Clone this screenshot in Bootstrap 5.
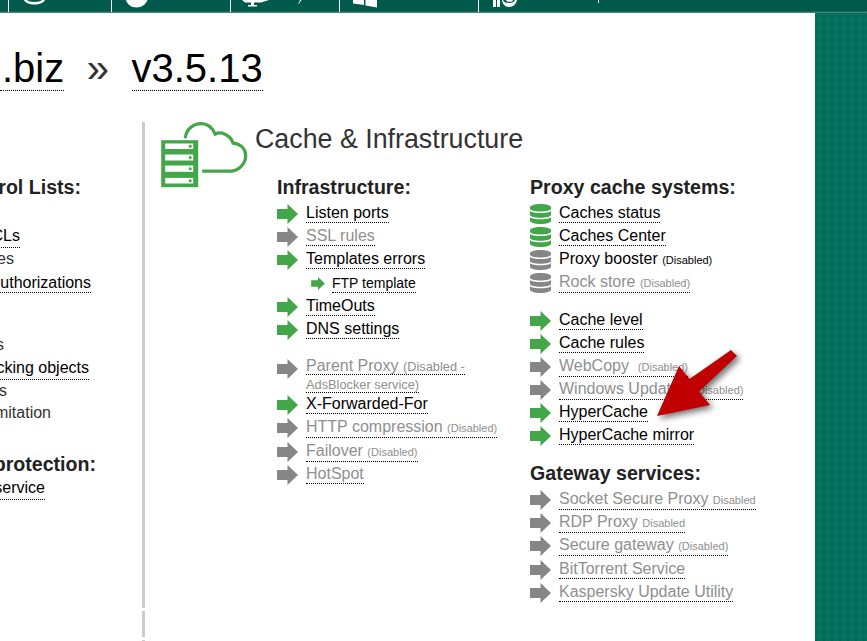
<!DOCTYPE html>
<html lang="en">

<head>
    <meta charset="UTF-8">
    <title>Cache &amp; Infrastructure</title>
    <meta name="viewport" content="width=device-width, initial-scale=1">
    <link href="https://cdn.jsdelivr.net/npm/bootstrap@5.3.0/dist/css/bootstrap.min.css" rel="stylesheet">
    <style>
        html, body {
            height: 100%;
        }

        body {
            font-family: "Liberation Sans", Arial, sans-serif;
            color: #000;
            overflow: hidden;
            background-color: #04705d;
            background-image:
                radial-gradient(circle, #0f8069 1px, transparent 1.5px),
                radial-gradient(circle, #026352 1px, transparent 1.5px);
            background-size: 8px 8px;
            background-position: 0 0, 4px 4px;
        }

        .page-wrap {
            position: relative;
            width: 867px;
            height: 641px;
            overflow: hidden;
        }

        /* top bar, icons are cut by the window edge */
        .top-bar {
            height: 13px;
            background: linear-gradient(#005a4b 0, #005a4b 11px, #5d9488 13px);
        }

        .top-item {
            height: 12px;
            border-left: 1px solid #fff;
        }

        .t1 { margin-left: 8px; width: 103px; padding-left: 14px; }
        .t2 { width: 119px; padding-left: 11px; }
        .t3 { width: 109px; padding-left: 11px; }
        .t4 { width: 139px; padding-left: 13px; }
        .t5 { width: 200px; padding-left: 14px; }

        .top-item svg {
            display: block;
            fill: #fff;
        }

        .top-tick {
            margin-left: 75px;
        }

        .panel {
            width: 815px;
            height: 628px;
            background: #fff;
        }

        .title-line {
            height: 109px;
            padding-top: 32px;
            font-size: 40px;
            line-height: 46px;
            color: #333;
            gap: 22.5px;
        }

        .title-line a {
            color: #333;
        }

        .biz-link {
            padding-left: 2px;
        }

        a.dots {
            color: #000;
            text-decoration: none;
            border-bottom: 1px dotted #000;
        }

        .off, a.dots.off {
            color: #8f8f8f;
        }

        .tiny {
            font-size: 11px;
        }

        .tiny-lg {
            font-size: 12.8px;
        }

        .side-col {
            width: 142px;
            flex: none;
            overflow: hidden;
            padding-top: 54px;
        }

        .side-line {
            height: 22.7px;
            font-size: 16px;
            line-height: 22.7px;
            white-space: nowrap;
            color: #333;
        }

        .side-first { height: 26px; }
        .side-gap { height: 18.5px; }
        .side-down { padding-top: 2px; }

        .e20 { width: 20px; }
        .e14 { width: 14px; }
        .e91 { width: 91px; }
        .e4 { width: 4px; }
        .e89 { width: 89px; }
        .e7 { width: 7px; }
        .e51 { width: 51px; }
        .e45 { width: 45px; }
        .e81 { width: 81px; }
        .e96 { width: 96px; }

        .side-head {
            font-size: 19.6px;
            font-weight: 700;
            line-height: 23px;
            white-space: nowrap;
            color: #222;
        }

        .side-head2 { margin-top: 28px; margin-bottom: 1px; }

        .divider {
            width: 3px;
            flex: none;
            gap: 3px;
        }

        .divider div {
            background: #ccc;
        }

        .d1 { height: 486px; }
        .d2 { height: 26px; }
        .d3 { height: 3px; }

        .content-col {
            padding-left: 16px;
        }

        .cloud-icon {
            width: 90px;
            height: 68px;
            flex: none;
        }

        .section-title {
            margin: 0 0 0 4px;
            font-size: 26.8px;
            font-weight: 400;
            line-height: 34px;
            color: #333;
        }

        .head-box {
            height: 54px;
        }

        .lists {
            padding-left: 116px;
        }

        .list-a { width: 253px; flex: none; }

        .list-head {
            font-size: 19.6px;
            font-weight: 700;
            line-height: 23px;
            color: #222;
            white-space: nowrap;
            margin-bottom: 3px;
        }

        .item {
            height: 23px;
            font-size: 16px;
            line-height: 18px;
            white-space: nowrap;
            gap: 8px;
        }

        .item svg {
            width: 21px;
            height: 20px;
            flex: none;
        }

        .item-sub {
            height: 24px;
            padding-left: 34px;
            font-size: 14px;
            gap: 7px;
        }

        .item-sub svg {
            width: 14px;
            height: 13px;
        }

        .item-wrap {
            height: 36px;
            line-height: 17px;
        }

        .item-wrap svg {
            margin-top: -13px;
        }

        .item-tall {
            height: 24px;
        }

        .item-gw {
            height: 23.3px;
        }

        .ok { color: #43a648; }
        .no { color: #868686; }
        .sp16 { height: 16px; }
        .sp15 { height: 15px; }

        .red-arrow {
            position: absolute;
            left: 640px;
            top: 340px;
            width: 110px;
            height: 90px;
            filter: drop-shadow(3px 3px 3px rgba(0, 0, 0, .55));
        }
    </style>
</head>

<body>
    <svg class="d-none">
        <symbol id="arr" viewBox="0 0 21 20">
            <path d="M0 5h10.5V0L21 10 10.5 20v-5H0z" fill="currentColor" />
        </symbol>
        <symbol id="db" viewBox="0 0 21 20">
            <g fill="currentColor">
                <path d="M0 3.2C0 1.4 4.7 0 10.5 0S21 1.4 21 3.2v1.2C21 6.2 16.3 7.4 10.5 7.4S0 6.2 0 4.4z" />
                <path d="M0 7c1.6 1.4 5.600 2 10.500 2S19.400 8.400 21 7v3.700c0 1.800-4.700 3-10.500 3S0 12.500 0 10.700z" />
                <path d="M0 13.300c1.600 1.400 5.600 2 10.500 2s8.900-.6 10.500-2v3.500C21 18.700 16.300 20 10.500 20S0 18.700 0 16.800z" />
            </g>
        </symbol>
    </svg>

    <div class="page-wrap">
        <!-- top bar -->
        <div class="top-bar d-flex">
            <div class="top-item t1">
                <svg width="24" height="12" viewBox="0 0 24 12"><path d="M1 0c1 2.500 5 4.500 10.500 4.500S21 2.500 22 0h-3c-1 1-3.500 2-7.500 2S5 1 4 0z" /></svg>
            </div>
            <div class="top-item t2">
                <svg width="28" height="12" viewBox="0 0 28 12"><path d="M3 0c1 4 5 7.500 10.500 7.500S23 4 24.500 0z" /></svg>
            </div>
            <div class="top-item t3 d-flex">
                <svg width="30" height="12" viewBox="0 0 30 12"><path d="M0 0l3 2.500h6V5H6v1.500h9V5h-3V2.500h7L27 0z" /></svg>
                <svg class="ms-4" width="6" height="12" viewBox="0 0 6 12"><path d="M4 0h1.500L3 3.500H1.500L3 2.500z" /></svg>
            </div>
            <div class="top-item t4">
                <svg width="26" height="12" viewBox="0 0 26 12"><path d="M0 0h11v5L0 3.500zM12.500 0H24v7.500L12.500 5.500z" /></svg>
            </div>
            <div class="top-item t5 d-flex">
                <svg width="30" height="12" viewBox="0 0 30 12"><path d="M0 0h3v7H0zM4 0h3v7H4z" /><path d="M9 0h1c.5 2 2.500 3 6 3s5-1 6-3h2c-.5 3.500-3.500 7-8 7S9.500 3.500 9 0zM13 0h7c-.5 1.500-1.800 1.800-3.500 1.800S13.500 1.500 13 0z" /></svg>
                <svg class="top-tick" width="1" height="3" viewBox="0 0 1 3"><rect width="1" height="3" /></svg>
            </div>
        </div>

        <div class="panel">
            <!-- title -->
            <div class="title-line d-flex align-items-start">
                <div><a class="dots biz-link" href="#">.biz</a></div>
                <div>»</div>
                <div><a class="dots" href="#">v3.5.13</a></div>
            </div>

            <div class="d-flex">
                <!-- left menu, cut by the window edge -->
                <div class="side-col">
                    <div class="side-head d-flex justify-content-end e81">rol Lists:</div>
                    <div class="side-line side-first"></div>
                    <div class="side-line d-flex justify-content-end e20"><a class="dots" href="#">ACLs</a></div>
                    <div class="side-line d-flex justify-content-end e14">es</div>
                    <div class="side-line side-down d-flex justify-content-end e91"><a class="dots" href="#">uthorizations</a></div>
                    <div class="side-line"></div>
                    <div class="side-gap"></div>
                    <div class="side-line d-flex justify-content-end e4">s</div>
                    <div class="side-line d-flex justify-content-end e89"><a class="dots" href="#">cking objects</a></div>
                    <div class="side-line d-flex justify-content-end e7">s</div>
                    <div class="side-line d-flex justify-content-end e51">mitation</div>
                    <div class="side-head side-head2 d-flex justify-content-end e96">protection:</div>
                    <div class="side-line d-flex justify-content-end e45"><a class="dots" href="#">service</a></div>
                </div>

                <div class="divider d-flex flex-column">
                    <div class="d1"></div>
                    <div class="d2"></div>
                    <div class="d3"></div>
                </div>

                <div class="content-col flex-grow-1">
                    <div class="d-flex head-box">
                        <svg class="cloud-icon" viewBox="0.800 0.800 90 68">
                            <path d="M25 17C26 8 33 2.500 41 2.500C47 2.500 52 6 55 13C60 10 70 13 73 22C81 23 85.500 28 85.500 34.500C85.500 43 78 50 70 50H42" fill="none" stroke="#43a648" stroke-width="3.200" />
                            <rect x="1" y="19" width="37" height="47" fill="#43a648" />
                            <g fill="#fff">
                                <rect x="5" y="22.300" width="28" height="5.500" />
                                <rect x="5" y="33.300" width="28" height="6" />
                                <rect x="5" y="44.300" width="28" height="6.300" />
                                <rect x="5" y="56.700" width="28" height="5.600" />
                            </g>
                            <g fill="#43a648">
                                <circle cx="30" cy="25" r="1.500" />
                                <circle cx="30" cy="36.300" r="1.500" />
                                <circle cx="30" cy="47.500" r="1.500" />
                                <circle cx="30" cy="59.500" r="1.500" />
                            </g>
                        </svg>
                        <h2 class="section-title">Cache &amp; Infrastructure</h2>
                    </div>

                    <div class="lists d-flex">
                        <div class="list-a">
                            <div class="list-head">Infrastructure:</div>
                            <div class="item d-flex align-items-center"><svg class="ok"><use href="#arr" /></svg><a class="dots" href="#">Listen ports</a></div>
                            <div class="item d-flex align-items-center"><svg class="no"><use href="#arr" /></svg><a class="dots off" href="#">SSL rules</a></div>
                            <div class="item d-flex align-items-center"><svg class="ok"><use href="#arr" /></svg><a class="dots" href="#">Templates errors</a></div>
                            <div class="item item-sub d-flex align-items-center"><svg class="ok"><use href="#arr" /></svg><a class="dots" href="#">FTP template</a></div>
                            <div class="item d-flex align-items-center"><svg class="ok"><use href="#arr" /></svg><a class="dots" href="#">TimeOuts</a></div>
                            <div class="item d-flex align-items-center"><svg class="ok"><use href="#arr" /></svg><a class="dots" href="#">DNS settings</a></div>
                            <div class="sp16"></div>
                            <div class="item item-wrap d-flex align-items-center"><svg class="no"><use href="#arr" /></svg><div><a class="dots off" href="#">Parent Proxy <span class="tiny-lg">(Disabled -<br>AdsBlocker service)</span></a></div></div>
                            <div class="item d-flex align-items-center"><svg class="ok"><use href="#arr" /></svg><a class="dots" href="#">X-Forwarded-For</a></div>
                            <div class="item item-tall d-flex align-items-center"><svg class="no"><use href="#arr" /></svg><a class="dots off" href="#">HTTP compression <span class="tiny">(Disabled)</span></a></div>
                            <div class="item d-flex align-items-center"><svg class="no"><use href="#arr" /></svg><a class="dots off" href="#">Failover <span class="tiny">(Disabled)</span></a></div>
                            <div class="item d-flex align-items-center"><svg class="no"><use href="#arr" /></svg><a class="dots off" href="#">HotSpot</a></div>
                        </div>

                        <div>
                            <div class="list-head">Proxy cache systems:</div>
                            <div class="item d-flex align-items-center"><svg class="ok"><use href="#db" /></svg><a class="dots" href="#">Caches status</a></div>
                            <div class="item d-flex align-items-center"><svg class="ok"><use href="#db" /></svg><a class="dots" href="#">Caches Center</a></div>
                            <div class="item d-flex align-items-center"><svg class="no"><use href="#db" /></svg><span>Proxy booster <span class="tiny">(Disabled)</span></span></div>
                            <div class="item d-flex align-items-center"><svg class="no"><use href="#db" /></svg><a class="dots off" href="#">Rock store <span class="tiny">(Disabled)</span></a></div>
                            <div class="sp15"></div>
                            <div class="item d-flex align-items-center"><svg class="ok"><use href="#arr" /></svg><a class="dots" href="#">Cache level</a></div>
                            <div class="item d-flex align-items-center"><svg class="ok"><use href="#arr" /></svg><a class="dots" href="#">Cache rules</a></div>
                            <div class="item d-flex align-items-center"><svg class="no"><use href="#arr" /></svg><a class="dots off" href="#">WebCopy &nbsp;<span class="tiny">(Disabled)</span></a></div>
                            <div class="item d-flex align-items-center"><svg class="no"><use href="#arr" /></svg><a class="dots off" href="#">Windows Update &nbsp;&nbsp;<span class="tiny">(Disabled)</span></a></div>
                            <div class="item d-flex align-items-center"><svg class="ok"><use href="#arr" /></svg><a class="dots" href="#">HyperCache</a></div>
                            <div class="item d-flex align-items-center"><svg class="ok"><use href="#arr" /></svg><a class="dots" href="#">HyperCache mirror</a></div>
                            <div class="sp15"></div>
                            <div class="list-head">Gateway services:</div>
                            <div class="item item-gw d-flex align-items-center"><svg class="no"><use href="#arr" /></svg><a class="dots off" href="#">Socket Secure Proxy <span class="tiny">Disabled</span></a></div>
                            <div class="item item-gw d-flex align-items-center"><svg class="no"><use href="#arr" /></svg><a class="dots off" href="#">RDP Proxy <span class="tiny">Disabled</span></a></div>
                            <div class="item item-gw d-flex align-items-center"><svg class="no"><use href="#arr" /></svg><a class="dots off" href="#">Secure gateway <span class="tiny">(Disabled)</span></a></div>
                            <div class="item item-gw d-flex align-items-center"><svg class="no"><use href="#arr" /></svg><a class="dots off" href="#">BitTorrent Service</a></div>
                            <div class="item item-gw d-flex align-items-center"><svg class="no"><use href="#arr" /></svg><a class="dots off" href="#">Kaspersky Update Utility</a></div>
                        </div>
                    </div>
                </div>
            </div>
        </div>

        <!-- annotation arrow on top of the screenshot -->
        <svg class="red-arrow" viewBox="0 0 110 90">
            <path d="M17 76L39 26L49.500 39L91 10L97 16L59 51.500L70 65z" fill="#c00000" />
        </svg>
    </div>

    <script src="https://cdn.jsdelivr.net/npm/bootstrap@5.3.0/dist/js/bootstrap.bundle.min.js"></script>
</body>

</html>
